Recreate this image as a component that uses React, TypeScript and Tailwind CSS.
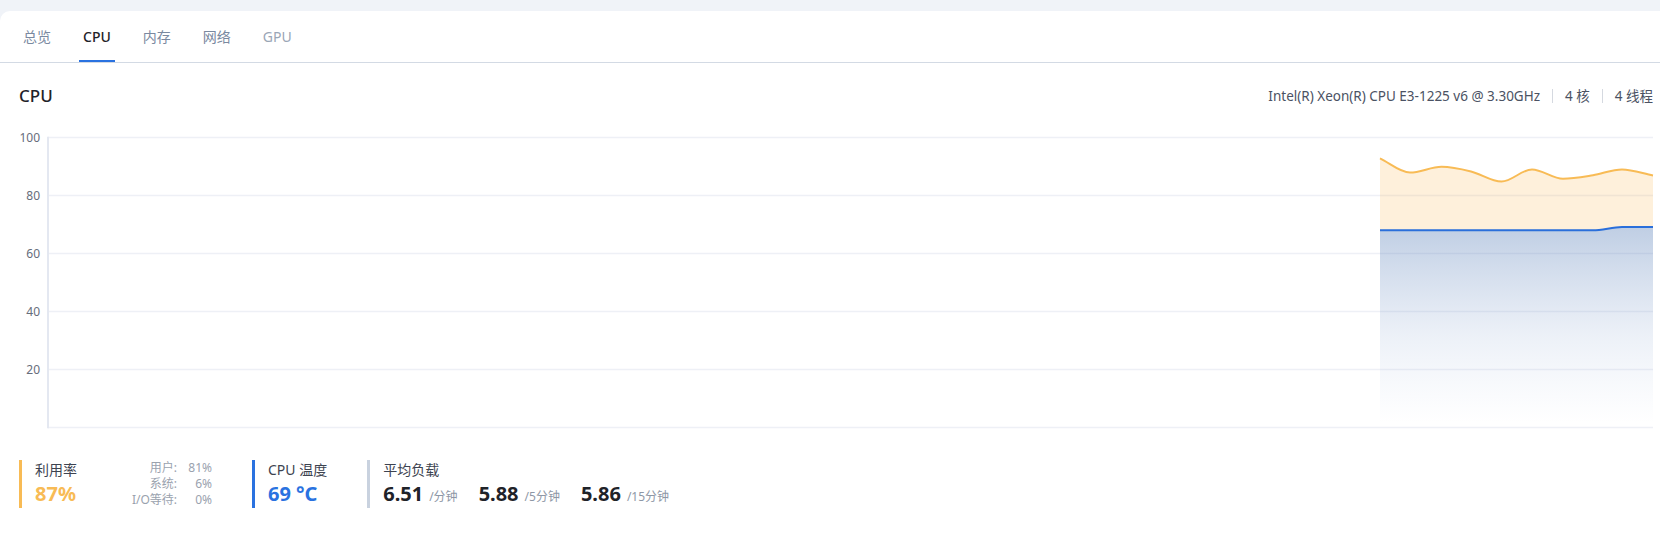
import React from 'react';

const FONT = "font-['Noto_Sans','Noto_Sans_CJK_SC',sans-serif]";

const tabs = [
  { label: '总览', active: false, muted: false },
  { label: 'CPU', active: true, muted: false },
  { label: '内存', active: false, muted: false },
  { label: '网络', active: false, muted: false },
  { label: 'GPU', active: false, muted: true },
];

// chart geometry (svg px)
const LEFT = 48;
const RIGHT = 1653;
const TOP = 17.5;
const STEP = 2.9; // px per percent
const y = (v: number) => TOP + (100 - v) * STEP;
const BOTTOM = y(0);

const xs = [1380, 1410, 1441.5, 1471, 1501.5, 1532, 1563, 1593, 1622, 1653];
const usage = [92.8, 87.9, 89.9, 88.3, 84.8, 89, 85.8, 87, 89, 86.9];
const temp = [68, 68, 68, 68, 68, 68, 68, 68, 69.1, 69.1];

type Pt = [number, number];

// monotone cubic (no overshoot on flat parts)
function curve(pts: Pt[]) {
  const n = pts.length;
  const dx: number[] = [];
  const m: number[] = [];
  for (let i = 0; i < n - 1; i++) {
    dx.push(pts[i + 1][0] - pts[i][0]);
    m.push((pts[i + 1][1] - pts[i][1]) / dx[i]);
  }
  const t: number[] = [m[0]];
  for (let i = 1; i < n - 1; i++) {
    if (m[i - 1] * m[i] <= 0) t.push(0);
    else t.push((m[i - 1] + m[i]) / 2);
  }
  t.push(m[n - 2]);
  let d = '';
  for (let i = 0; i < n - 1; i++) {
    const h = dx[i] / 3;
    const [x1, y1] = pts[i];
    const [x2, y2] = pts[i + 1];
    d += ` C${x1 + h},${y1 + t[i] * h} ${x2 - h},${y2 - t[i + 1] * h} ${x2},${y2}`;
  }
  return d;
}

function CpuChart() {
  const up: Pt[] = xs.map((x, i) => [x, y(usage[i])]);
  const tp: Pt[] = xs.map((x, i) => [x, y(temp[i])]);
  const tpRev: Pt[] = [...tp].reverse().map(([px, py]) => [-px, py]);
  // build reversed temp curve by mirroring x, then flip back
  const revD = curve(tpRev).replace(/(-?[\d.]+),(-?[\d.]+)/g, (_, a, b) => `${-Number(a)},${b}`);

  const usageLine = `M${up[0][0]},${up[0][1]}` + curve(up);
  const tempLine = `M${tp[0][0]},${tp[0][1]}` + curve(tp);
  const last = tp[tp.length - 1];
  const usageArea = usageLine + ` L${last[0]},${last[1]}` + revD + ' Z';
  const tempArea = tempLine + ` L${RIGHT},${BOTTOM} L${xs[0]},${BOTTOM} Z`;

  return (
    <svg width={1660} height={320} viewBox="0 0 1660 320" className="block">
      <defs>
        <linearGradient id="tempFill" x1="0" y1={y(69)} x2="0" y2={BOTTOM - 4} gradientUnits="userSpaceOnUse">
          <stop offset="0" stopColor="#4f78b4" stopOpacity="0.36" />
          <stop offset="0.55" stopColor="#6d8fc4" stopOpacity="0.13" />
          <stop offset="1" stopColor="#8aa6d4" stopOpacity="0" />
        </linearGradient>
      </defs>
      {[100, 80, 60, 40, 20, 0].map((v) => (
        <g key={v}>
          <line x1={LEFT} x2={RIGHT} y1={y(v)} y2={y(v)} stroke="#eef0f6" strokeWidth={1.6} />
          {v > 0 && (
            <text
              x={40}
              y={y(v)}
              textAnchor="end"
              dominantBaseline="central"
              fontSize={12}
              fill="#666d7b"
              fontFamily="'Noto Sans', sans-serif"
            >
              {v}
            </text>
          )}
        </g>
      ))}
      <line x1={LEFT} x2={LEFT} y1={y(100) - 0.8} y2={BOTTOM + 0.8} stroke="#e4e8f1" strokeWidth={2} />

      <path d={usageArea} fill="#f9b54a" fillOpacity={0.2} />
      <path d={tempArea} fill="url(#tempFill)" />
      <path d={usageLine} fill="none" stroke="#f8bb55" strokeWidth={2} />
      <path d={tempLine} fill="none" stroke="#2a6fdb" strokeWidth={2} />
    </svg>
  );
}

export default function App() {
  return (
    <div className={`h-screen overflow-hidden bg-[#f0f3f8] pt-[11px] ${FONT}`}>
      <div className="h-full rounded-tl-[10px] bg-white">
        <nav className="flex h-[52px] gap-6 border-b border-[#d3dae4] pl-[19px]">
          {tabs.map((t) => (
            <div
              key={t.label}
              className={
                'relative flex h-full items-center px-1 text-[14px] ' +
                (t.active
                  ? 'font-medium text-[#1f2329]'
                  : t.muted
                    ? 'text-[#9aa6b6]'
                    : 'text-[#7a89a0]')
              }
            >
              {t.label}
              {t.active && <span className="absolute bottom-0 left-0 h-0.5 w-full bg-[#2a72e0]" />}
            </div>
          ))}
        </nav>

        <div className="mt-[21px] mb-3 flex h-6 items-center justify-between pl-[19px] pr-[7px]">
          <h2 className="text-[17px] font-medium text-[#1f2329]">CPU</h2>
          <div className="flex items-center text-[13.5px] text-[#4b5263]">
            <span>Intel(R) Xeon(R) CPU E3-1225 v6 @ 3.30GHz</span>
            <span className="mx-3 h-[14px] w-px bg-[#d5d9e0]" />
            <span>4 核</span>
            <span className="mx-3 h-[14px] w-px bg-[#d5d9e0]" />
            <span>4 线程</span>
          </div>
        </div>

        <CpuChart />

        <div className="mt-5 flex gap-10 pl-[19px]">
          <div className="flex w-[193px] justify-between border-l-[3px] border-[#f8bb55] pl-[13px]">
            <div className="flex flex-col">
              <span className="text-[14px] leading-5 text-[#3d4350]">利用率</span>
              <span className="text-[20px] font-bold leading-7 text-[#f8bb55]">87%</span>
            </div>
            <div className="grid grid-cols-[auto_35px] text-[12px] leading-4 text-[#9aa2ae]">
              <span className="text-right">用户:</span>
              <span className="text-right">81%</span>
              <span className="text-right">系统:</span>
              <span className="text-right">6%</span>
              <span className="text-right">I/O等待:</span>
              <span className="text-right">0%</span>
            </div>
          </div>

          <div className="flex flex-col border-l-[3px] border-[#2a72e0] pl-[13px]">
            <span className="text-[14px] leading-5 text-[#3d4350]">CPU 温度</span>
            <span className="text-[20px] font-bold leading-7 text-[#2a72e0]">69 °C</span>
          </div>

          <div className="flex flex-col border-l-[3px] border-[#c9d2df] pl-[13px]">
            <span className="text-[14px] leading-5 text-[#3d4350]">平均负载</span>
            <div className="flex items-baseline gap-[21px]">
              {[
                ['6.51', '/分钟'],
                ['5.88', '/5分钟'],
                ['5.86', '/15分钟'],
              ].map(([v, u]) => (
                <span key={u} className="flex items-baseline gap-1.5">
                  <span className="text-[20px] font-bold leading-7 text-[#1f2329]">{v}</span>
                  <span className="text-[12px] text-[#8e97a6]">{u}</span>
                </span>
              ))}
            </div>
          </div>
        </div>
      </div>
    </div>
  );
}
